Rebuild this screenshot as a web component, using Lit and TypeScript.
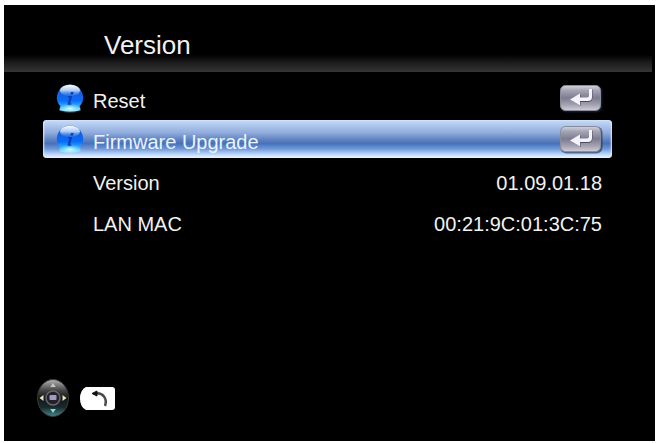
import { LitElement, html, css, svg } from "lit";
import { customElement, property } from "lit/decorators.js";

@customElement("info-orb")
class InfoOrb extends LitElement {
  static styles = css`
    :host { display: block; width: 28px; height: 30px; }
    svg { display: block; width: 100%; height: 100%; }
  `;
  render() {
    return html`<svg viewBox="0 0 28 30" aria-hidden="true">
      <defs>
        <linearGradient id="body" x1="0" y1="0" x2="0" y2="1">
          <stop offset="0" stop-color="#5a86c8" />
          <stop offset="0.3" stop-color="#1560e0" />
          <stop offset="0.6" stop-color="#0a6cf8" />
          <stop offset="0.82" stop-color="#35b4ff" />
          <stop offset="1" stop-color="#a8f4ff" />
        </linearGradient>
        <linearGradient id="gloss" x1="0" y1="0" x2="0" y2="1">
          <stop offset="0" stop-color="#ffffff" />
          <stop offset="0.5" stop-color="#c4dcfa" stop-opacity="0.85" />
          <stop offset="1" stop-color="#5c9cf4" stop-opacity="0.1" />
        </linearGradient>
        <radialGradient id="glow">
          <stop offset="0" stop-color="#e0ffff" />
          <stop offset="1" stop-color="#7fdcff" stop-opacity="0" />
        </radialGradient>
      </defs>
      <path d="M14 1.500a13 13 0 0 1 9.600 21.800l1 4q-10.600 2.600-21.200 0l1-4A13 13 0 0 1 14 1.500z" fill="url(#body)" />
      <ellipse cx="14" cy="25.500" rx="12" ry="5" fill="url(#glow)" />
      <ellipse cx="14" cy="7.500" rx="10" ry="5.800" fill="url(#gloss)" />
      <path d="M15 9h2.600l-.7 2.400h-2.600zM12 13h4.200l-2 7.500h1.400l-.4 1.300h-3.800l2-7.500h-1.700z" fill="#0a3fb4" />
    </svg>`;
  }
}

@customElement("enter-key")
class EnterKey extends LitElement {
  static styles = css`
    :host { display: block; width: 42px; height: 26px; }
    svg { display: block; width: 100%; height: 100%; overflow: visible; }
  `;
  render() {
    return html`<svg viewBox="0 0 42 26" aria-hidden="true">
      <defs>
        <linearGradient id="key" x1="0" y1="0" x2="0" y2="1">
          <stop offset="0" stop-color="#d2d4de" />
          <stop offset="0.2" stop-color="#a4a4b4" />
          <stop offset="0.5" stop-color="#7d7b90" />
          <stop offset="0.75" stop-color="#a09eae" />
          <stop offset="1" stop-color="#d0ced6" />
        </linearGradient>
      </defs>
      <rect class="edge" x="0.500" y="0.500" width="42" height="27" rx="6" fill="#1b2a48" fill-opacity="0.600" />
      <rect x="0.500" y="0.500" width="40" height="25" rx="5" fill="url(#key)" stroke="#8a8c9c" />
      <path d="M11.500 15.500l9-6v4h6.500q2 0 2-2V4.500h3.500V12q0 5-5 5h-7v4z" fill="#4c4a60" />
      <path d="M10 14.500l10-6v4h7q2 0 2-2V4h3v8q0 4-4 4h-8v4.500z" fill="#f4f2fa" />
    </svg>`;
  }
}

@customElement("menu-row")
class MenuRow extends LitElement {
  @property() label = "";
  @property({ type: Boolean, reflect: true }) selected = false;
  static styles = css`
    :host { display: block; }
    .row {
      box-sizing: border-box;
      display: grid;
      grid-template-columns: 28px 1fr auto;
      align-items: center;
      column-gap: 9px;
      width: 100%;
      height: 38px;
      padding: 0 10px 0 13px;
      border: 0;
      border-radius: 4px;
      background: none;
      color: #f2f2f2;
      font: inherit;
      text-align: left;
    }
    .label { padding-top: 6px; line-height: 24px; }
    :host([selected]) .row {
      background: linear-gradient(#c4daf4 0, #b0c8ee 14%, #8fabdc 34%, #5f82c0 52%, #4672bc 62%, #6f98d8 76%, #bcd6fa 90%, #f0f8ff 100%);
      box-shadow: inset 1px 0 2px #dcebff, inset -1px 0 2px #dcebff;
      color: #e9f3ff;
    }
  `;
  render() {
    return html`<button class="row" type="button">
      <info-orb></info-orb><span class="label">${this.label}</span><enter-key></enter-key>
    </button>`;
  }
}

const dpad = svg`
  <defs>
    <linearGradient id="pad" x1="0" y1="0" x2="0" y2="1">
      <stop offset="0" stop-color="#b4b4b4" />
      <stop offset="0.3" stop-color="#444446" />
      <stop offset="0.5" stop-color="#151517" />
      <stop offset="0.75" stop-color="#182a2d" />
      <stop offset="1" stop-color="#4c8586" />
    </linearGradient>
  </defs>
  <ellipse cx="16" cy="19" rx="15.500" ry="18.500" fill="url(#pad)" stroke="#3a3a3a" />
  <circle cx="16" cy="19" r="7" fill="#222228" stroke="#66666c" stroke-width="1.500" />
  <rect x="12.500" y="16" width="7" height="5" rx="1" fill="#9c9cc4" />
  <path d="M2.500 19l4-3v6z" fill="#e4e8c0" />
  <path d="M29.500 19l-4-3v6z" fill="#e4e8c0" />
  <path d="M16 4l2.800 4h-5.600z" fill="#c4c4c4" />
  <path d="M16 34l2.800-4h-5.600z" fill="#7fe0ea" />
`;

@customElement("app-root")
class AppRoot extends LitElement {
  static styles = css`
    :host {
      display: block;
      box-sizing: border-box;
      min-height: 100vh;
      padding: 5px 1px 2px 4px;
      background: #fff;
      font: 20px/24px "Liberation Sans", Arial, sans-serif;
      color: #f2f2f2;
    }
    .screen {
      display: flex;
      flex-direction: column;
      min-height: calc(100vh - 7px);
      background: #000;
    }
    header {
      padding: 24px 100px 11px;
      margin-right: 3px;
      background: linear-gradient(#0000 74%, #1c1c1c 86%, #353535 100%);
    }
    h1 { margin: 0; font-size: 26px; line-height: 32px; font-weight: 400; }
    main { display: grid; gap: 3px; padding: 7px 43px 0 39px; }
    dl { display: grid; gap: 3px; margin: 0; }
    .info {
      box-sizing: border-box;
      display: flex;
      justify-content: space-between;
      align-items: center;
      height: 38px;
      padding: 6px 10px 0 50px;
    }
    dd { margin: 0; }
    footer {
      display: flex;
      align-items: center;
      gap: 11px;
      margin-top: auto;
      padding: 0 33px 24px;
    }
    .control { display: block; padding: 0; border: 0; background: none; }
    .control svg { display: block; }
  `;
  render() {
    return html`<div class="screen">
      <header><h1>Version</h1></header>
      <main>
        <menu-row label="Reset"></menu-row>
        <menu-row label="Firmware Upgrade" selected></menu-row>
        <dl>
          <div class="info"><dt>Version</dt><dd>01.09.01.18</dd></div>
          <div class="info"><dt>LAN MAC</dt><dd>00:21:9C:01:3C:75</dd></div>
        </dl>
      </main>
      <footer>
        <button class="control" type="button" aria-label="Navigate">
          <svg width="32" height="38" viewBox="0 0 32 38">${dpad}</svg>
        </button>
        <button class="control" type="button" aria-label="Back">
          <svg width="35" height="23" viewBox="0 0 35 23">
            <path d="M6 0h26q3 0 3 3v17q0 3-3 3H6q-6-3-6-11.500T6 0z" fill="#fff" />
            <path d="M15 6.500q6-1 9 3 3 4 1 9.500" fill="none" stroke="#4c4c4c" stroke-width="2.500" />
            <path d="M12 6.500l5-2.500v5z" fill="#111" stroke="#111" stroke-linejoin="round" />
          </svg>
        </button>
      </footer>
    </div>`;
  }
}
